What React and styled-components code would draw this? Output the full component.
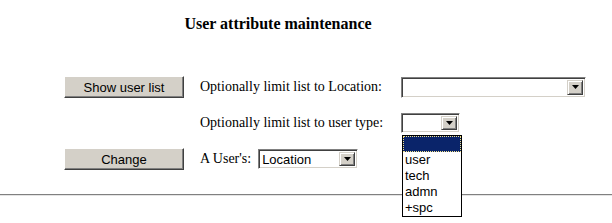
import React from "react";
import styled, { createGlobalStyle } from "styled-components";

const Global = createGlobalStyle`
  html, body { margin: 0; padding: 0; background: #fff; }
  body { font-family: "Liberation Serif", "Times New Roman", serif; color: #000; }
`;

const Page = styled.div`
  width: 612px;
  height: 223px;
  overflow: hidden;
  position: relative;
`;

const Title = styled.h3`
  margin: 0;
  padding: 14px 56px 0 0;
  text-align: center;
  font-family: "Liberation Serif", "Times New Roman", serif;
  font-weight: bold;
  font-size: 16px;
  line-height: 19px;
`;

const Form = styled.div`
  display: grid;
  grid-template-columns: 120px 217px auto;
  grid-auto-rows: 22px;
  row-gap: 14px;
  column-gap: 0;
  padding-left: 64px;
  margin-top: 43px;
  align-items: center;
`;

const Cell = styled.div`
  display: flex;
  align-items: center;
  padding-left: ${(p) => p.$indent || 0}px;
  position: relative;
`;

const Label = styled.span`
  font-family: "Liberation Serif", "Times New Roman", serif;
  font-size: 14px;
  white-space: nowrap;
`;

const PushButton = styled.div`
  box-sizing: border-box;
  width: 120px;
  height: 22px;
  background: #d4d0c8;
  border: 1px solid;
  border-color: #fff #404040 #404040 #fff;
  box-shadow: inset -1px -1px #808080, inset 1px 1px #d4d0c8;
  display: flex;
  align-items: center;
  justify-content: center;
  font-family: "Liberation Sans", Arial, sans-serif;
  font-size: 13px;
  color: #000;
`;

const SelectBox = styled.div`
  box-sizing: border-box;
  position: relative;
  width: ${(p) => p.$w}px;
  height: ${(p) => p.$h}px;
  background: #fff;
  border: 1px solid;
  border-color: #808080 #fff #fff #808080;
  box-shadow: inset 1px 1px #404040, inset -1px -1px #d4d0c8;
  padding: 2px;
  display: flex;
  align-items: stretch;
  margin-left: ${(p) => p.$ml || 0}px;
`;

const SelectValue = styled.div`
  flex: 1;
  display: flex;
  align-items: center;
  padding-left: 1px;
  font-family: "Liberation Sans", Arial, sans-serif;
  font-size: 13px;
  overflow: hidden;
  white-space: nowrap;
`;

const ArrowBtn = styled.div`
  box-sizing: border-box;
  width: 16px;
  background: #d4d0c8;
  border: 1px solid;
  border-color: #d4d0c8 #404040 #404040 #d4d0c8;
  box-shadow: inset 1px 1px #fff, inset -1px -1px #808080;
  display: flex;
  align-items: center;
  justify-content: center;
`;

const ListBox = styled.div`
  position: absolute;
  top: ${(p) => p.$top}px;
  left: 0;
  width: 60px;
  box-sizing: border-box;
  background: #fff;
  border: 1px solid #000;
  z-index: 2;
`;

const ListItem = styled.div`
  height: 16px;
  box-sizing: border-box;
  line-height: 16px;
  padding-left: 1px;
  font-family: "Liberation Sans", Arial, sans-serif;
  font-size: 13px;
  color: ${(p) => (p.$sel ? "#fff" : "#000")};
  background: ${(p) => (p.$sel ? "#0a246a" : "#fff")};
  border: 1px dotted ${(p) => (p.$sel ? "#f2e28a" : "transparent")};
  display: flex;
  align-items: center;
`;

const Rule = styled.hr`
  margin: 24px 0 0 0;
  border: 0;
  border-top: 1px solid #808080;
  border-bottom: 1px solid #e4e4e4;
  height: 0;
`;

const Arrow = () => (
  <svg width="7" height="4" viewBox="0 0 7 4">
    <path d="M0 0h7L3.5 4z" fill="#000" />
  </svg>
);

const Select = ({ w, h, value, ml, children }) => (
  <SelectBox $w={w} $h={h} $ml={ml}>
    <SelectValue>{value}</SelectValue>
    <ArrowBtn>
      <Arrow />
    </ArrowBtn>
    {children}
  </SelectBox>
);

export default function App() {
  const types = ["", "user", "tech", "admn", "+spc"];
  return (
    <Page>
      <Global />
      <Title>User attribute maintenance</Title>
      <Form>
        <Cell>
          <PushButton>Show user list</PushButton>
        </Cell>
        <Cell $indent={16}>
          <Label>Optionally limit list to Location:</Label>
        </Cell>
        <Cell>
          <Select w={185} h={21} value="" />
        </Cell>

        <Cell />
        <Cell $indent={16}>
          <Label>Optionally limit list to user type:</Label>
        </Cell>
        <Cell>
          <Select w={59} h={20} value="">
            <ListBox $top={21}>
              {types.map((t, i) => (
                <ListItem key={i} $sel={i === 0}>
                  {t}
                </ListItem>
              ))}
            </ListBox>
          </Select>
        </Cell>

        <Cell>
          <PushButton>Change</PushButton>
        </Cell>
        <Cell $indent={16}>
          <Label>A User's:</Label>
          <Select w={100} h={20} value="Location" ml={7} />
        </Cell>
        <Cell />
      </Form>
      <Rule />
    </Page>
  );
}
